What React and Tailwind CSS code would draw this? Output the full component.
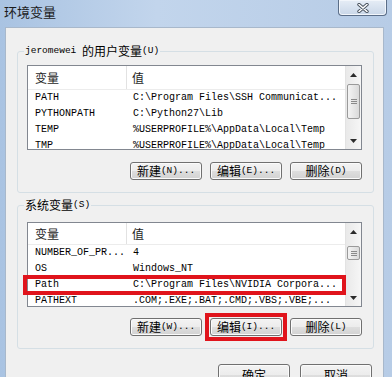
import React from "react";

const userVars = [
  ["PATH", "C:\\Program Files\\SSH Communicat..."],
  ["PYTHONPATH", "C:\\Python27\\Lib"],
  ["TEMP", "%USERPROFILE%\\AppData\\Local\\Temp"],
  ["TMP", "%USERPROFILE%\\AppData\\Local\\Temp"],
];

const systemVars = [
  ["NUMBER_OF_PR...", "4"],
  ["OS", "Windows_NT"],
  ["Path", "C:\\Program Files\\NVIDIA Corpora..."],
  ["PATHEXT", ".COM;.EXE;.BAT;.CMD;.VBS;.VBE;..."],
];

const cjk = "font-[family-name:'Noto_Sans_CJK_SC',sans-serif]";
const mono = "font-[family-name:'Liberation_Mono','Noto_Sans_CJK_SC',monospace]";

function Arrow({ down }) {
  return (
    <svg width="7" height="4" viewBox="0 0 7 4" className={down ? "rotate-180" : ""}>
      <path d="M3.5 0 L7 4 L0 4 Z" fill="#2b2b2b" />
    </svg>
  );
}

function ScrollBar({ thumbClass }) {
  return (
    <div className="flex w-[16px] flex-col border-l border-[#e3e3e3] bg-[linear-gradient(90deg,#e9e9e9,#f6f6f6)]">
      <div className="flex h-[17px] items-center justify-center">
        <Arrow />
      </div>
      <div className="flex-1">
        <div
          className={`mx-[1px] flex flex-col items-center justify-center gap-[1px] rounded-[2px] border border-[#9a9a9a] bg-[linear-gradient(90deg,#f4f4f4,#dadada)] ${thumbClass}`}
        >
          <span className="h-px w-[6px] bg-[#8a8a8a]" />
          <span className="h-px w-[6px] bg-[#8a8a8a]" />
          <span className="h-px w-[6px] bg-[#8a8a8a]" />
        </div>
      </div>
      <div className="flex h-[17px] items-center justify-center">
        <Arrow down />
      </div>
    </div>
  );
}

function VarList({ rows, headerClass, thumbClass, children }) {
  return (
    <div className="relative h-[85px] w-[335px] border border-[#828790] bg-white">
      <div className="flex h-full">
        <div className="flex-1 overflow-hidden">
          <div className={`flex border-b border-[#ececec] text-[12px] text-[#1e1e1e] ${cjk} ${headerClass}`}>
            <div className="flex w-[99px] items-center border-r border-[#e2e2e2] pl-[7px]">变量</div>
            <div className="flex items-center pl-[5px]">值</div>
          </div>
          {rows.map(([name, value]) => (
            <div key={name} className={`flex h-[16px] text-[10px] leading-[16px] text-black ${mono}`}>
              <div className="w-[100px] whitespace-nowrap pl-[7px]">{name}</div>
              <div className="whitespace-nowrap pl-[5px]">{value}</div>
            </div>
          ))}
        </div>
        <ScrollBar thumbClass={thumbClass} />
      </div>
      {children}
    </div>
  );
}

function WinButton({ label, keyText, children, className = "" }) {
  return (
    <button
      type="button"
      className={`relative flex h-[18px] w-[72px] items-center justify-center rounded-[3px] border border-[#707070] bg-[linear-gradient(#f3f3f3_0%,#ececec_50%,#dedede_51%,#d2d2d2_100%)] text-black shadow-[inset_0_0_0_1px_#fbfbfb] ${className}`}
    >
      <span className={`text-[12px] leading-none ${cjk}`}>{label}</span>
      {keyText && <span className={`text-[9.5px] leading-none ${mono}`}>{keyText}</span>}
      {children}
    </button>
  );
}

function GroupBox({ title, children, className = "" }) {
  return (
    <div className={`relative w-[357px] rounded-[3px] border border-[#d5dfe5] pl-[9px] pr-[11px] pb-[12px] ${className}`}>
      <div className="absolute -top-[9px] left-[6px] flex items-center bg-[#f0f0f0] px-[1px] leading-[16px] text-black">
        {title}
      </div>
      {children}
    </div>
  );
}

export default function App() {
  return (
    <div className="h-[377px] w-[392px] overflow-hidden bg-[linear-gradient(90deg,#a9c3e2,#c2d5ec_40%,#b7cce6)]">
      {/* title bar */}
      <div className="relative flex h-[27px] items-start pl-[4px] pt-[3px]">
        <span className={`text-[13px] leading-[17px] text-[#1b1b1b] ${cjk}`}>环境变量</span>
        <div className="absolute left-[338px] top-0 flex h-[16px] w-[49px] items-center justify-center rounded-b-[4px] border border-t-0 border-[#5b6e88] bg-[linear-gradient(#e6edf6,#c9d7e8)] shadow-[inset_0_0_0_1px_#f2f6fb]">
          <svg width="12" height="10" viewBox="0 0 12 10">
            <path d="M2 1.5 L10 8.5 M10 1.5 L2 8.5" stroke="#46505c" strokeWidth="3.4" strokeLinecap="round" />
            <path d="M2 1.5 L10 8.5 M10 1.5 L2 8.5" stroke="#ffffff" strokeWidth="1.6" strokeLinecap="round" />
          </svg>
        </div>
      </div>

      {/* client area */}
      <div className="ml-[5px] h-[350px] w-[379px] border border-b-0 border-[#a8b8cb] bg-[#f0f0f0] pl-[11px]">
        <GroupBox
          className="mt-[23px] pt-[13px]"
          title={
            <>
              <span className={`text-[9.5px] ${mono}`}>jeromewei&nbsp;</span>
              <span className={`text-[12px] ${cjk}`}>的用户变量</span>
              <span className={`text-[9.5px] ${mono}`}>(U)</span>
            </>
          }
        >
          <VarList rows={userVars} headerClass="h-[24px]" thumbClass="mt-px h-[35px]" />
          <div className="mt-[12px] flex justify-end gap-[8px] pr-0">
            <WinButton label="新建" keyText="(N)..." />
            <WinButton label="编辑" keyText="(E)..." />
            <WinButton label="删除" keyText="(D)" />
          </div>
        </GroupBox>

        <GroupBox
          className="mt-[12px] pt-[16px]"
          title={
            <>
              <span className={`text-[12px] ${cjk}`}>系统变量</span>
              <span className={`text-[9.5px] ${mono}`}>(S)</span>
            </>
          }
        >
          <VarList rows={systemVars} headerClass="h-[22px]" thumbClass="mt-[6px] h-[14px]">
            <div className="absolute left-[-5px] top-[52px] h-[20px] w-[323px] border-4 border-[#e0141c]" />
          </VarList>
          <div className="mt-[11px] flex justify-end gap-[8px]">
            <WinButton label="新建" keyText="(W)..." />
            <WinButton label="编辑" keyText="(I)...">
              <span className="absolute -inset-[6px] border-4 border-[#e0141c]" />
            </WinButton>
            <WinButton label="删除" keyText="(L)" />
          </div>
        </GroupBox>

        <div className="mt-[15px] flex w-[357px] justify-end gap-[10px] pr-[2px]">
          <WinButton label="确定" className="h-[22px] w-[71px]" />
          <WinButton label="取消" className="h-[22px] w-[71px]" />
        </div>
      </div>
    </div>
  );
}
